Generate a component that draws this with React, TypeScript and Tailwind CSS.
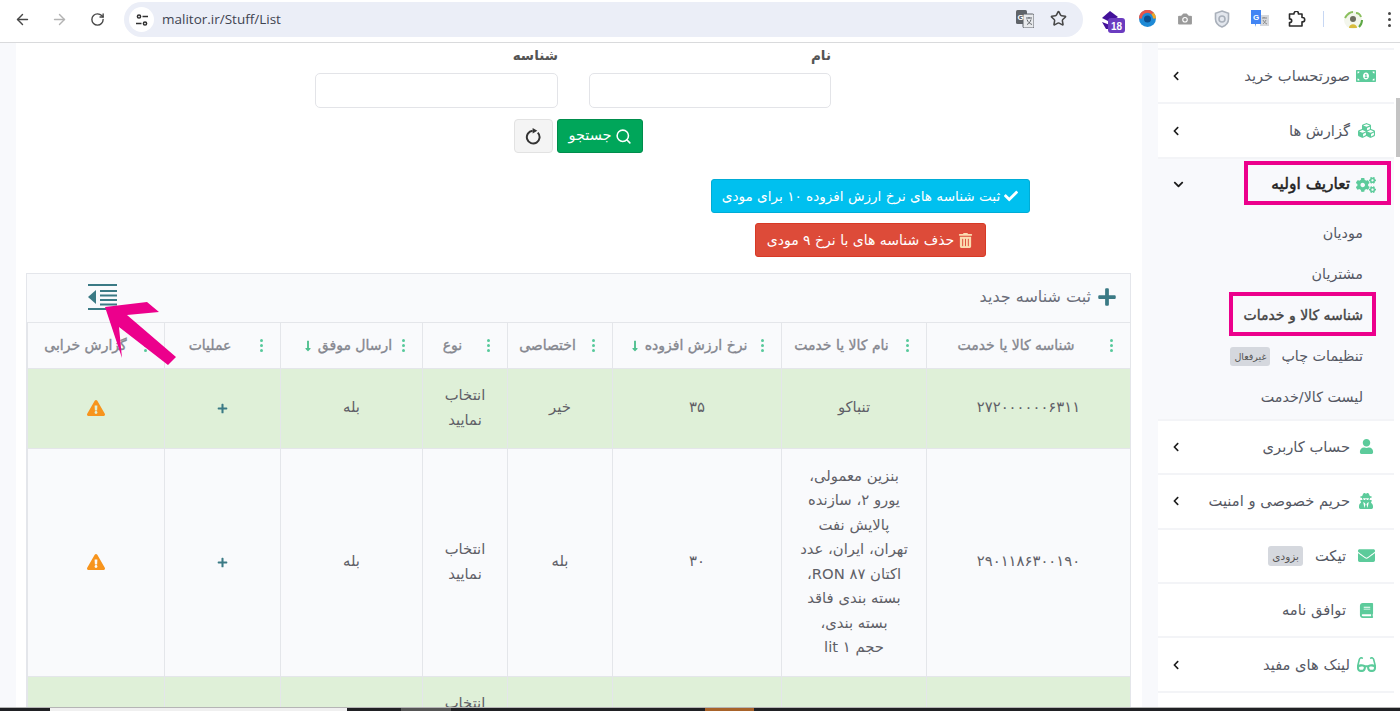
import React from "react";
import { ArrowLeft, ArrowRight, RotateCw, Star, Camera, Search } from "lucide-react";
import {
  FaMoneyBillAlt, FaCubes, FaCogs, FaUser, FaUserSecret, FaEnvelope, FaBook, FaGlasses,
  FaChevronLeft, FaChevronDown, FaPlus, FaExclamationTriangle, FaTrashAlt, FaCheck, FaLongArrowAltDown,
} from "react-icons/fa";

const Dots = () => (
  <span className="flex flex-col gap-[2px] w-[3px] shrink-0">
    <i className="block w-[3px] h-[3px] rounded-full bg-[#57c99b]" />
    <i className="block w-[3px] h-[3px] rounded-full bg-[#57c99b]" />
    <i className="block w-[3px] h-[3px] rounded-full bg-[#57c99b]" />
  </span>
);

const Reload = () => (
  <svg width="17" height="17" viewBox="0 0 20 20" fill="none">
    <path d="M15 5.500A7.500 7.500 0 1 1 9 3.300" stroke="#333" strokeWidth="2.300" />
    <path d="M9 0l5.500 3.300L9 6.600z" fill="#333" />
  </svg>
);

const Translate = () => (
  <svg width="18" height="18" viewBox="0 0 18 18">
    <rect x="0" y="0" width="11" height="14" rx="1.500" fill="#5f6368" />
    <rect x="7" y="4" width="11" height="14" rx="1.500" fill="#e8eaed" stroke="#5f6368" />
    <text x="1.500" y="10" fontSize="8" fontWeight="700" fill="#fff" fontFamily="Liberation Sans">G</text>
    <path d="M10 8h6M13 7v1.500M11 9.500c1 3 3 4 5 5M15 9.500c-1 3-2 4-4 5" stroke="#5f6368" fill="none" strokeWidth="1" />
  </svg>
);

function Chrome() {
  return (
    <div className="h-[43px] shrink-0 bg-white border-b border-[#d9dadc] flex items-center relative">
      <ArrowLeft size={17} className="absolute left-[14px] top-[11px] text-[#474747]" />
      <ArrowRight size={17} className="absolute left-[51px] top-[11px] text-[#b3b3b3]" />
      <RotateCw size={15} strokeWidth={2.2} className="absolute left-[90px] top-[12px] text-[#474747]" />
      <div className="absolute left-[124px] top-[2px] w-[959px] h-[35px] rounded-full bg-[#ebeef7] flex items-center pl-[5px]">
        <span className="w-[25px] h-[25px] rounded-full bg-white flex items-center justify-center">
          <svg width="14" height="14" viewBox="0 0 14 14" fill="none" stroke="#303030" strokeWidth="1.500">
            <circle cx="4" cy="3.500" r="1.600" /><path d="M7.500 3.500H13M1 10.500h5.500" /><circle cx="10" cy="10.500" r="1.600" />
          </svg>
        </span>
        <span className="ml-[8px] text-[13.5px] text-[#3f4451] font-['Open_Sans',sans-serif]">malitor.ir/Stuff/List</span>
      </div>
      <span className="absolute left-[1016px] top-[10px]"><Translate /></span>
      <Star size={17} strokeWidth={2.2} className="absolute left-[1050px] top-[10px] text-[#474747]" />
      <span className="absolute left-[1101px] top-[10px]">
        <svg width="25" height="25" viewBox="0 0 25 25">
          <path d="M1 8 9 1l8 6-8 5z" fill="#43119a" />
          <path d="M1 12l8 3 3-1v5H5z" fill="#43119a" />
          <rect x="7" y="8" width="17" height="15" rx="3" fill="#6b3cc0" />
          <text x="10" y="20" fontSize="10" fontWeight="700" fill="#fff" fontFamily="Liberation Sans">18</text>
        </svg>
      </span>
      <span className="absolute left-[1139px] top-[10px]">
        <svg width="17" height="17" viewBox="0 0 17 17" fill="none">
          <circle cx="8.500" cy="8.500" r="8.500" fill="#1e8ad6" />
          <path d="M1.500 8.500a7 7 0 0 1 12-5" stroke="#e8574a" strokeWidth="3" />
          <path d="M13.500 3.500a7 7 0 0 1 2 5" stroke="#f5a623" strokeWidth="3" />
          <circle cx="8.500" cy="9" r="3.500" fill="#0d4f8f" />
        </svg>
      </span>
      <Camera size={18} fill="#9a9a9a" stroke="#fff" strokeWidth={1.5} className="absolute left-[1176px] top-[10px]" />
      <span className="absolute left-[1214px] top-[10px]">
        <svg width="16" height="18" viewBox="0 0 16 18" fill="#e3e7ee" stroke="#a9b0ba" strokeWidth="1.600">
          <path d="M8 1l6.500 2.200V9c0 4-3 6.600-6.500 8C4.500 15.600 1.500 13 1.500 9V3.200z" />
          <circle cx="8" cy="9" r="3" fill="none" />
        </svg>
      </span>
      <span className="absolute left-[1251px] top-[10px]">
        <svg width="18" height="18" viewBox="0 0 18 18">
          <path d="M9 5h9v11H9z" fill="#d6d8dc" />
          <path d="M0 0h10v14H5l-1 3v-3H0z" fill="#4285f4" />
          <text x="2" y="9.500" fontSize="8" fontWeight="700" fill="#fff" fontFamily="Liberation Sans">G</text>
          <path d="M11 8h5M13 7v1M12 10c1 2 2 3 4 4M15 10c-1 2-2 3-3 4" stroke="#777" fill="none" strokeWidth=".8" />
        </svg>
      </span>
      <span className="absolute left-[1288px] top-[11px]">
        <svg width="18" height="16" viewBox="0 0 18 16" fill="none" stroke="#2b2b2b" strokeWidth="1.600" strokeLinejoin="round">
          <path d="M1.500 3H6V2.500a2.200 2.200 0 0 1 4.400 0V3H14v3.500h.5a2.200 2.200 0 0 1 0 4.400H14V15H1.500V11.500c1.500 0 2.200-.8 2.200-1.800S3 7.900 1.500 7.900z" />
        </svg>
      </span>
      <span className="absolute left-[1323px] top-[11px] w-[1px] h-[16px] bg-[#c7d7f3]" />
      <span className="absolute left-[1342px] top-[10px]">
        <svg width="22" height="20" viewBox="0 0 22 20">
          <circle cx="11" cy="10" r="9" fill="#f3f6ec" />
          <path d="M3 8c3-5 6-6 8-6M19 7c-1-3-3-4-5-4" stroke="#8bbf5e" strokeWidth="2" fill="none" />
          <circle cx="11" cy="9" r="3" fill="#6d6d5f" />
          <path d="M7 18c0-5 8-5 8 0z" fill="#d8bc3d" />
          <path d="M17 17c2-2 3-4 3-7" stroke="#5da845" strokeWidth="2" fill="none" />
        </svg>
      </span>
      <span className="absolute left-[1388px] top-[12px] flex flex-col gap-[3px]">
        <i className="block w-[3px] h-[3px] rounded-full bg-[#474747]" />
        <i className="block w-[3px] h-[3px] rounded-full bg-[#474747]" />
        <i className="block w-[3px] h-[3px] rounded-full bg-[#474747]" />
      </span>
    </div>
  );
}

const headers: { t: string; sort?: boolean; w: string; pl?: string }[] = [
  { t: "شناسه کالا یا خدمت", w: "w-[204px]" },
  { t: "نام کالا یا خدمت", w: "w-[145px]" },
  { t: "نرخ ارزش افزوده", sort: true, w: "w-[169px]", pl: "pl-[7px]" },
  { t: "اختصاصی", w: "w-[105px]" },
  { t: "نوع", w: "w-[85px]" },
  { t: "ارسال موفق", sort: true, w: "w-[142px]", pl: "pl-[16px]" },
  { t: "عملیات", w: "w-[116px]" },
  { t: "گزارش خرابی", w: "w-[137px]", pl: "pl-[4px]" },
];

const td = "border border-[#e4e6ea] text-center align-middle px-[12px] pb-[2px] text-[14.8px] text-[#5f6067] font-normal";

function Row({ id, name, rate, own, h, green }: { id: string; name: React.ReactNode; rate: string; own: string; h: string; green?: boolean }) {
  return (
    <tr className={`${h} ${green ? "bg-[#dff0d8]" : "bg-[#f9fafc]"}`}>
      <td className={td}>{id}</td>
      <td className={`${td} leading-[24.5px]`}>{name}</td>
      <td className={td}>{rate}</td>
      <td className={td}>{own}</td>
      <td className={`${td} leading-[24.5px]`}>انتخاب<br />نمایید</td>
      <td className={td}>بله</td>
      <td className={td}><FaPlus size={11} className="inline text-[#3b7a85]" /></td>
      <td className={td}><FaExclamationTriangle size={18} className="inline text-[#f7941d]" /></td>
    </tr>
  );
}

function Content() {
  return (
    <div className="w-[1126px] shrink-0 bg-white">
      <div className="pl-[299px] pt-[4px] flex gap-[31px]">
        <label className="w-[243px] block text-right text-[13.5px] font-bold text-[#555]" dir="rtl">
          <span className="block h-[26px] leading-[16px]">شناسه</span>
          <input className="block w-full h-[35px] border border-[#e3e4e8] rounded-[5px] bg-white" />
        </label>
        <label className="w-[242px] block text-right text-[13.5px] font-bold text-[#555]" dir="rtl">
          <span className="block h-[26px] leading-[16px]">نام</span>
          <input className="block w-full h-[35px] border border-[#e3e4e8] rounded-[5px] bg-white" />
        </label>
      </div>

      <div className="pl-[498px] mt-[11px] flex gap-[4px]">
        <button className="w-[39px] h-[34px] bg-[#f4f4f4] border border-[#e2e2e2] rounded-[4px] flex items-center justify-center">
          <Reload />
        </button>
        <button dir="rtl" className="w-[86px] h-[34px] bg-[#00a65a] border border-[#008d4c] rounded-[3px] flex items-center justify-center gap-[3px] text-white text-[14.5px]">
          <Search size={17} strokeWidth={2.2} />جستجو
        </button>
      </div>

      <div className="ml-[582px] w-[544px] mt-[26px] flex flex-col items-center gap-[10px]">
        <button dir="rtl" className="w-[319px] h-[34px] bg-[#00c0ef] border border-[#00acd6] rounded-[3px] flex items-center justify-center gap-[4px] text-white text-[13.6px]">
          <FaCheck size={14} />ثبت شناسه های نرخ ارزش افزوده ۱۰ برای مودی
        </button>
        <button dir="rtl" className="w-[231px] h-[34px] bg-[#dd4b39] border border-[#d73925] rounded-[3px] flex items-center justify-center gap-[4px] text-white text-[14px]">
          <FaTrashAlt size={15} className="text-[#fbdcb0]" />حذف شناسه های با نرخ ۹ مودی
        </button>
      </div>

      <div className="ml-[10px] mr-[11px] mt-[16px] border border-[#e4e6eb] border-b-0">
        <div className="h-[48px] pb-[2px] bg-[#f9fafc] flex items-center justify-between pl-[61px] pr-[13px]">
          <svg width="29" height="26" viewBox="0 0 29 26">
            <path d="M0 1h29M12 7h17M12 11.500h17M12 16h17M12 20.500h17M0 25h29" stroke="#3b7a85" strokeWidth="2" />
            <path d="M8 6v14L0 13z" fill="#3b7a85" />
          </svg>
          <div dir="rtl" className="flex items-center gap-[6px] text-[16px] text-[#6b6e7a]">
            <FaPlus size={20} className="text-[#3b7a85]" />ثبت شناسه جدید
          </div>
        </div>
        <table dir="rtl" className="w-full table-fixed border-collapse">
          <colgroup>{headers.map((c) => <col key={c.t} className={c.w} />)}</colgroup>
          <thead>
            <tr className="h-[46px] bg-[#f9fafc]">
              {headers.map((c) => (
                <th key={c.t} className="border border-[#e4e6ea] p-0">
                  <div className="flex items-center pr-[17px] text-[14px] font-normal [-webkit-text-stroke:0.35px] text-[#85878f]">
                    <Dots />
                    <span className={`flex-1 min-w-0 pr-[5px] ${c.pl ?? ""} flex items-center justify-center gap-[4px] whitespace-nowrap`}>
                      {c.t}{c.sort && <FaLongArrowAltDown size={12} className="text-[#4fc08f]" />}
                    </span>
                  </div>
                </th>
              ))}
            </tr>
          </thead>
          <tbody>
            <Row green h="h-[80px]" id="۲۷۲۰۰۰۰۰۰۶۳۱۱" name="تنباکو" rate="۳۵" own="خیر" />
            <Row
              h="h-[228px]"
              id="۲۹۰۱۱۸۶۳۰۰۱۹۰"
              name={<>بنزین معمولی،<br />یورو ۲، سازنده<br />پالایش نفت<br />تهران، ایران، عدد<br />اکتان RON ۸۷،<br />بسته بندی فاقد<br />بسته بندی،<br />حجم ۱ lit</>}
              rate="۳۰"
              own="بله"
            />
            <Row green h="h-[80px]" id="" name="" rate="" own="" />
          </tbody>
        </table>
      </div>
    </div>
  );
}

function Item({ icon, label, chev = true, badge }: { icon: React.ReactNode; label: string; chev?: boolean; badge?: string }) {
  return (
    <div className="h-[54.4px] border-b-2 border-[#f3f4f7] flex items-center pr-[18px] pl-[13px] text-[14.7px] text-[#555863]">
      <span className="w-[20px] flex justify-center text-[#5ccb9b]">{icon}</span>
      <span className={chev ? "mr-[6px]" : "mr-[10px]"}>{label}</span>
      {badge && <span className="mr-[12px] px-[4px] h-[20px] leading-[20px] rounded-[3px] bg-[#d5d8de] text-[10.5px] text-[#555]">{badge}</span>}
      {chev && <FaChevronLeft size={10} className="mr-auto text-[#1c1c1c]" />}
    </div>
  );
}

function Sidebar() {
  return (
    <div dir="rtl" className="w-[236px] shrink-0 bg-white pt-[5px]">
      <div className="border-t-2 border-[#f3f4f7]" />
      <Item icon={<FaMoneyBillAlt size={20} />} label="صورتحساب خرید" />
      <Item icon={<FaCubes size={17} />} label="گزارش ها" />
      <div className="bg-[#f8f9fc] h-[262px] border-b-2 border-[#f3f4f7]">
        <div className="h-[52px] mb-[2px] flex items-center pr-[18px] pl-[15px] text-[15.5px] [-webkit-text-stroke:0.5px] text-[#222]">
          <span className="w-[20px] flex justify-center text-[#5ccb9b]"><FaCogs size={20} /></span>
          <span className="mr-[6px]">تعاریف اولیه</span>
          <FaChevronDown size={11} className="mr-auto text-[#1c1c1c]" />
        </div>
        <div className="pr-[31px] text-[14.3px] text-[#555863]">
          <div className="h-[41px] flex items-center">موديان</div>
          <div className="h-[41px] flex items-center">مشتریان</div>
          <div className="h-[41px] flex items-center text-[14px] [-webkit-text-stroke:0.4px] text-[#444]">شناسه کالا و خدمات</div>
          <div className="h-[41px] flex items-center">
            تنظیمات چاپ
            <span className="mr-[11px] px-[4px] h-[19px] leading-[19px] rounded-[3px] bg-[#d5d8de] text-[9.5px] text-[#555]">غیرفعال</span>
          </div>
          <div className="h-[41px] flex items-center">لیست کالا/خدمت</div>
        </div>
      </div>
      <Item icon={<FaUser size={15} />} label="حساب کاربری" />
      <Item icon={<FaUserSecret size={16} />} label="حریم خصوصی و امنیت" />
      <Item icon={<FaEnvelope size={17} />} label="تیکت" chev={false} badge="بزودی" />
      <Item icon={<FaBook size={15} />} label="توافق نامه" chev={false} />
      <Item icon={<FaGlasses size={19} />} label="لینک های مفید" />
    </div>
  );
}

export default function App() {
  return (
    <div className="relative w-[1400px] h-[711px] overflow-hidden bg-[#f8f9fc] flex flex-col font-['DejaVu_Sans','Noto_Sans',sans-serif]">
      <Chrome />
      <div className="flex-1 min-h-0 flex">
        <div className="w-[16px] shrink-0" />
        <Content />
        <div className="w-[16px] shrink-0" />
        <Sidebar />
        <div className="flex-1 bg-white relative">
          <span className="absolute right-0 top-[55px] w-[4px] h-[59px] bg-[#c4c4c4]" />
        </div>
      </div>
      <div className="h-[4px] shrink-0 flex bg-[#202124] border-t border-[#b5b5b5]">
        <span className="w-[50px]" />
        <span className="w-[297px] bg-[#f0f0f0]" />
        <span className="w-[54px]" />
        <span className="w-[50px] bg-[#555]" />
        <span className="w-[254px]" />
        <span className="w-[49px] bg-[#a8632a]" />
      </div>

      <span className="absolute left-[1244px] top-[161px] w-[147px] h-[44px] border-4 border-[#ec008c]" />
      <span className="absolute left-[1229px] top-[292px] w-[147px] h-[44px] border-4 border-[#ec008c]" />
      <svg className="absolute left-[100px] top-[298px]" width="80" height="70" viewBox="100 298 80 70">
        <polygon points="105,307 147,302 159,312 127,315 176,357 168,365 119,327 122,358" fill="#ec008c" />
      </svg>
    </div>
  );
}
